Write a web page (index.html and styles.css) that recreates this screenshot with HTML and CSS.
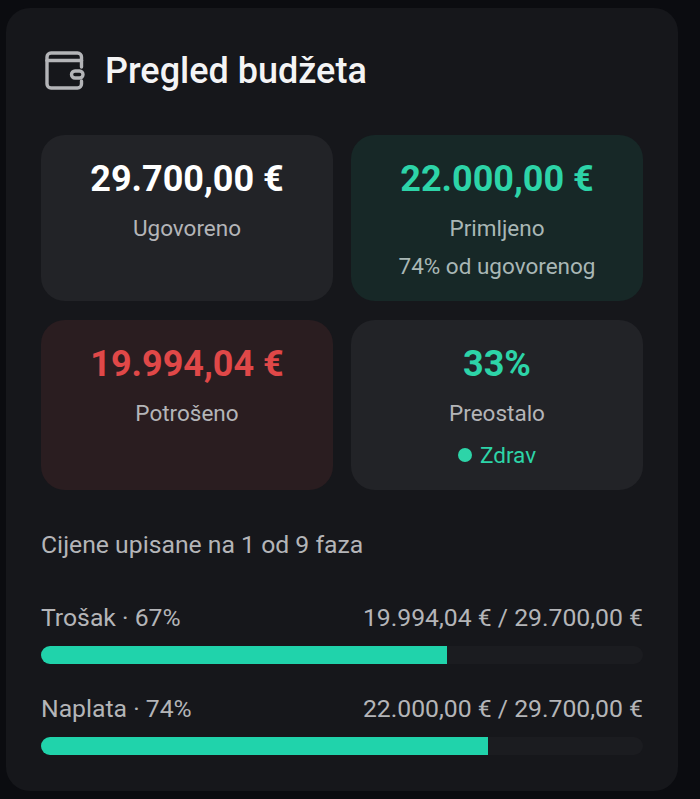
FILE: index.html
```html
<!DOCTYPE html>
<html>
<head>
    <meta charset="UTF-8">
    <title>Pregled budžeta</title>
    <link rel="stylesheet" href="styles.css">
</head>
<body>
    <div class="card">
        <div class="card-header">
            <!-- wallet icon -->
            <svg class="wallet" width="40" height="40" viewBox="0 0 40 40" fill="none" stroke="#b4b5b8" stroke-width="3.400" stroke-linejoin="round" stroke-linecap="round">
                <path d="M36.500 16V6a4 4 0 0 0-4-4H6a4 4 0 0 0-4 4v27a4 4 0 0 0 4 4h26.500a4 4 0 0 0 4-4v-3"/>
                <path d="M2 9.500H36.500"/>
                <rect x="26.500" y="20" width="11.500" height="7" rx="3.500"/>
            </svg>
            <h1>Pregled budžeta</h1>
        </div>

        <div class="tiles">
            <div class="tile">
                <div class="amount">29.700,00 €</div>
                <div class="label">Ugovoreno</div>
            </div>
            <div class="tile tile-green">
                <div class="amount green">22.000,00 €</div>
                <div class="label">Primljeno</div>
                <div class="note">74% od ugovorenog</div>
            </div>
            <div class="tile tile-red">
                <div class="amount red">19.994,04 €</div>
                <div class="label">Potrošeno</div>
            </div>
            <div class="tile">
                <div class="amount green">33%</div>
                <div class="label">Preostalo</div>
                <div class="status"><span class="dot"></span>Zdrav</div>
            </div>
        </div>

        <p class="phases">Cijene upisane na 1 od 9 faza</p>

        <div class="meter">
            <div class="meter-text">
                <span>Trošak · 67%</span>
                <span>19.994,04 € / 29.700,00 €</span>
            </div>
            <div class="track"><div class="fill" style="width: 67.4%"></div></div>
        </div>
        <div class="meter">
            <div class="meter-text">
                <span>Naplata · 74%</span>
                <span>22.000,00 € / 29.700,00 €</span>
            </div>
            <div class="track"><div class="fill" style="width: 74.2%"></div></div>
        </div>
    </div>
</body>
</html>
```

FILE: styles.css
```css
html, body {
    height: 100%;
}
body {
    background-color: #0b0c10;
    box-sizing: border-box;
    color: #b4b5b8;
    font-family: Roboto, "Liberation Sans", sans-serif;
    margin: 0;
    padding: 8px 22px 8px 6px;
}
.card {
    background-color: #16171b;
    border-radius: 24px;
    box-sizing: border-box;
    height: 783px;
    padding: 0 35px;
}
.card-header {
    align-items: center;
    display: flex;
    gap: 20px;
    height: 127px;
    padding-bottom: 2px;
    box-sizing: border-box;
    padding-left: 4px;
}
.wallet {
    flex: none;
}
h1 {
    color: #f4f4f5;
    font-size: 36px;
    font-weight: 500;
    margin: 0;
}
.tiles {
    display: grid;
    gap: 19px 18px;
    grid-template-columns: 1fr 1fr;
    grid-template-rows: 166px 170px;
}
.tile {
    background-color: #222327;
    border-radius: 24px;
    padding-top: 22px;
    text-align: center;
}
.tile-green {
    background-color: #172827;
}
.tile-red {
    background-color: #2a1d20;
}
.amount {
    color: #ffffff;
    font-size: 36px;
    font-weight: 700;
    line-height: 44px;
}
.green {
    color: #2dd4a8;
}
.red {
    color: #e04848;
}
.label {
    font-size: 22.500px;
    line-height: 28px;
    margin-top: 13px;
}
.note {
    font-size: 22.500px;
    line-height: 28px;
    margin-top: 10px;
}
.tile-green .label, .tile-green .note {
    color: #a9b7b5;
}
.status {
    align-items: center;
    color: #2dd4a8;
    display: flex;
    font-size: 22.500px;
    gap: 8px;
    justify-content: center;
    line-height: 28px;
    margin-top: 14px;
}
.dot {
    background-color: #2dd4a8;
    border-radius: 50%;
    height: 14px;
    width: 14px;
}
.phases {
    font-size: 24.750px;
    line-height: 28px;
    margin: 41px 0 0;
}
.meter {
    margin-top: 31px;
}
.phases + .meter {
    margin-top: 45px;
}
.meter-text {
    display: flex;
    font-size: 24.750px;
    justify-content: space-between;
    line-height: 28px;
}
.track {
    background-color: #1b1c20;
    border-radius: 10px;
    height: 18.500px;
    margin-top: 13.500px;
    overflow: hidden;
}
.fill {
    background-color: #20d3ab;
    height: 100%;
}
```
